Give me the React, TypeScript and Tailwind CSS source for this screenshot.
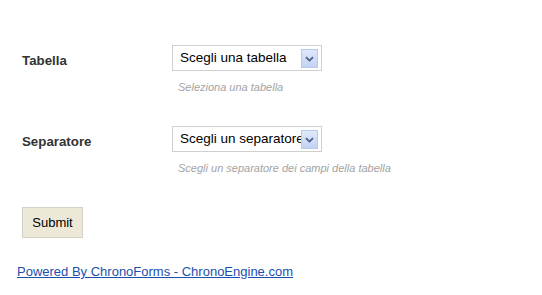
import React from "react";

function Arrow() {
  return (
    <div className="absolute right-[3px] top-[3px] flex h-[19px] w-[17px] items-center justify-center border border-[#b9c9ea] bg-gradient-to-b from-[#dfe8fb] to-[#c3d3f5]">
      <svg width="9" height="6" viewBox="0 0 9 6">
        <path d="M1 1.2 L4.5 4.6 L8 1.2" fill="none" stroke="#4b5f86" strokeWidth="1.8" />
      </svg>
    </div>
  );
}

function Select({ text }: { text: string }) {
  return (
    <div className="relative h-[26px] w-[150px] border border-[#cfcfcf] bg-white">
      <div className="h-full w-[140px] overflow-hidden whitespace-nowrap pl-[7px] pt-[4px] text-[13.5px] leading-[15px] text-black">
        {text}
      </div>
      <Arrow />
    </div>
  );
}

function Row({ label, select, help }: { label: string; select: string; help: string }) {
  return (
    <div className="flex">
      <div className="w-[150px] pt-[8px] text-[13.3px] font-bold leading-[15px] text-[#333333]">{label}</div>
      <div className="flex flex-col">
        <Select text={select} />
        <div className="mt-[10px] pl-[6px] text-[11px] italic leading-[13px] text-[#a3a3a3]">{help}</div>
      </div>
    </div>
  );
}

export default function App() {
  return (
    <div className="h-[295px] w-[542px] bg-white" style={{ fontFamily: '"Liberation Sans", Arial, sans-serif' }}>
      <div className="flex flex-col gap-[32px] pl-[22px] pt-[45px]">
        <Row label="Tabella" select="Scegli una tabella" help="Seleziona una tabella" />
        <Row label="Separatore" select="Scegli un separatore" help="Scegli un separatore dei campi della tabella" />
        <div>
          <button className="h-[31px] w-[61px] border border-[#d4d0c8] bg-[#ece9d8] text-[13px] leading-[15px] text-black">
            Submit
          </button>
        </div>
      </div>
      <div className="mt-[26px] pl-[17px] text-[13px] leading-[15px]">
        <a href="#" className="text-[#1c4fae] underline">
          Powered By ChronoForms - ChronoEngine.com
        </a>
      </div>
    </div>
  );
}
